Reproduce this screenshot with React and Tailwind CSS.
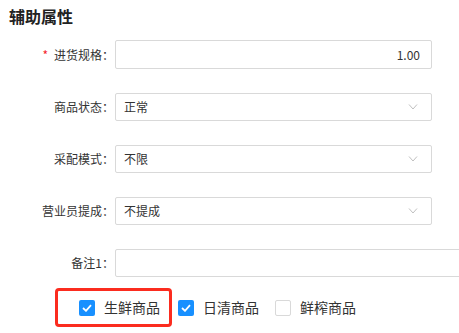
import React from "react";

const font = { fontFamily: '"Noto Sans CJK SC", "Noto Sans", sans-serif' };

function Chevron() {
  return (
    <svg width="10" height="6" viewBox="0 0 10 6" className="absolute right-[13px] top-1/2 -translate-y-1/2">
      <path d="M1 0.5 L5 5 L9 0.5" fill="none" stroke="#bfbfbf" strokeWidth="1" />
    </svg>
  );
}

function Row({ label, required, children, height = "h-[28px]" }) {
  return (
    <div className={`flex items-center ${height}`}>
      <label className="w-[114px] shrink-0 text-right text-[12px] text-[#333]">
        {required && <span className="text-[#f5222d] mr-[6px]">*</span>}
        {label}
      </label>
      <div className="ml-[1px] h-full">{children}</div>
    </div>
  );
}

function Check({ checked, label }) {
  return (
    <div className="flex items-center">
      {checked ? (
        <span className="w-[16px] h-[16px] rounded-[2px] bg-[#1890ff] flex items-center justify-center">
          <svg width="10" height="8" viewBox="0 0 10 8">
            <path d="M1 4 L4 6.8 L9 1.2" fill="none" stroke="#fff" strokeWidth="1.8" />
          </svg>
        </span>
      ) : (
        <span className="w-[16px] h-[16px] rounded-[2px] border border-[#d9d9d9] bg-white" />
      )}
      <span className="ml-[9px] text-[14px] text-[#333]">{label}</span>
    </div>
  );
}

export default function App() {
  return (
    <div className="w-[459px] h-[333px] bg-white overflow-hidden relative" style={font}>
      <h2 className="pl-[9px] pt-[5px] text-[16px] leading-[22px] font-bold text-[#222]">辅助属性</h2>

      <div className="mt-[13px] flex flex-col gap-[24px]">
        <Row label="进货规格：" required height="h-[29px]">
          <div className="w-[317px] h-full border border-[#d9d9d9] rounded-[2px] flex items-center justify-end pr-[11px] text-[12px] text-[#333]">
            1.00
          </div>
        </Row>
        <Row label="商品状态：">
          <div className="relative w-[317px] h-full border border-[#d9d9d9] rounded-[2px] flex items-center pl-[8px] text-[12px] text-[#333]">
            正常
            <Chevron />
          </div>
        </Row>
        <Row label="采配模式：">
          <div className="relative w-[317px] h-full border border-[#d9d9d9] rounded-[2px] flex items-center pl-[8px] text-[12px] text-[#333]">
            不限
            <Chevron />
          </div>
        </Row>
        <Row label="营业员提成：">
          <div className="relative w-[317px] h-full border border-[#d9d9d9] rounded-[2px] flex items-center pl-[8px] text-[12px] text-[#333]">
            不提成
            <Chevron />
          </div>
        </Row>
        <Row label="备注1：">
          <div className="w-[380px] h-full border border-[#d9d9d9] rounded-[2px]" />
        </Row>
      </div>

      <div className="mt-[11px] ml-[55px] flex items-center">
        <div className="h-[39px] border-[3px] border-[#fb2c1f] rounded-[4px] pl-[21px] pr-[9px] flex items-center">
          <Check checked label="生鲜商品" />
        </div>
        <div className="ml-[6px]">
          <Check checked label="日清商品" />
        </div>
        <div className="ml-[16px]">
          <Check label="鲜榨商品" />
        </div>
      </div>
    </div>
  );
}
